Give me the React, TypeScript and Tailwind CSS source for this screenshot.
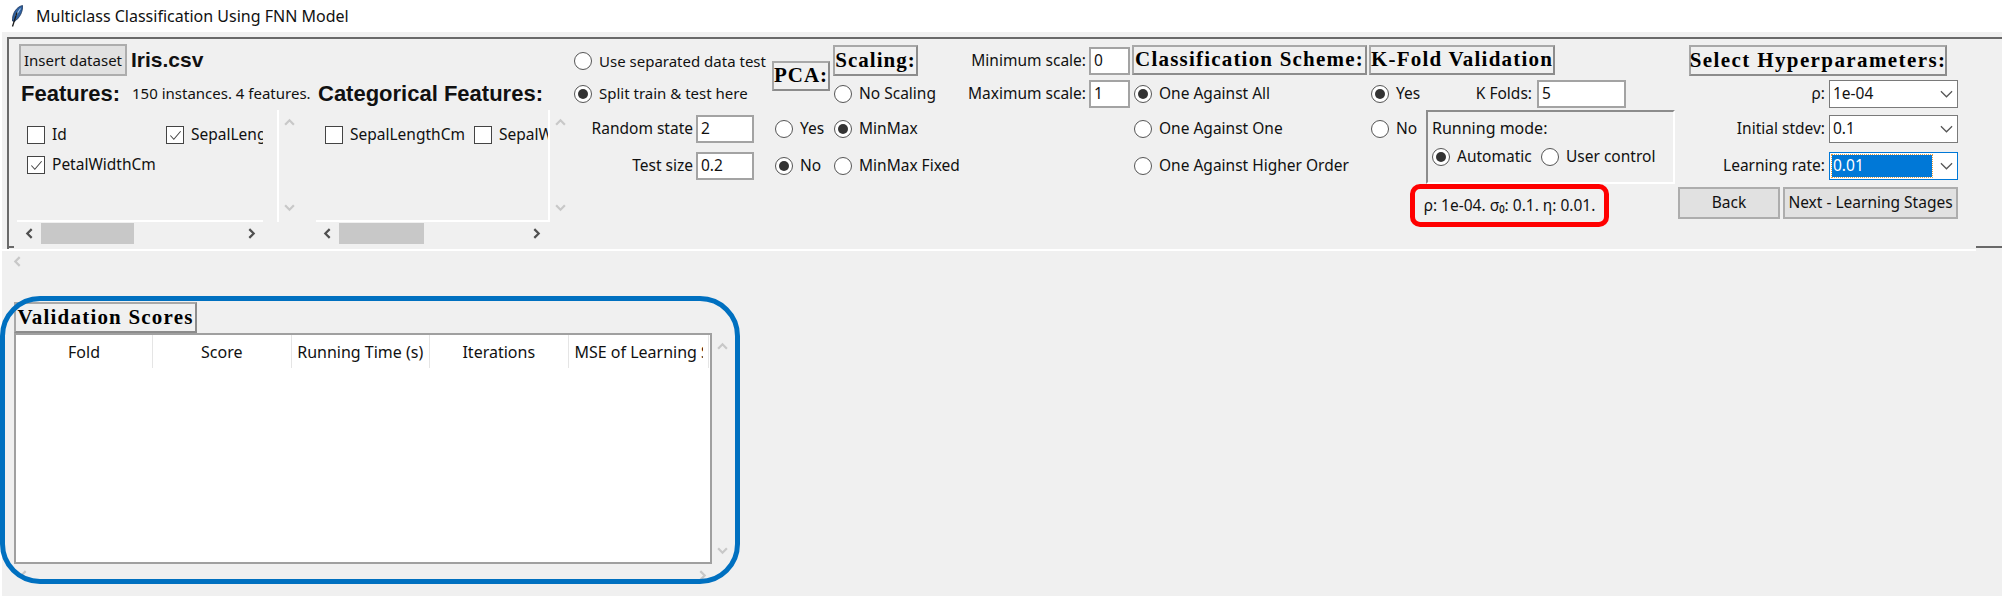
import { ReactNode } from "react";

const arrowPaths = {
  up: "M1 7 L5 3 L9 7",
  down: "M1 3 L5 7 L9 3",
  left: "M7 1 L3 5 L7 9",
  right: "M3 1 L7 5 L3 9",
};

function Arrow({ dir, className }: { dir: keyof typeof arrowPaths; className?: string }) {
  return (
    <svg viewBox="0 0 10 10" className={`size-[11px] ${className ?? ""}`} fill="none" stroke="currentColor" strokeWidth="2">
      <path d={arrowPaths[dir]} />
    </svg>
  );
}

function Radio({ label, checked }: { label?: string; checked?: boolean }) {
  return (
    <div className="flex items-center gap-[7px] whitespace-nowrap">
      <span className="flex size-[18px] shrink-0 items-center justify-center rounded-full border-[1.5px] border-[#555555] bg-white">
        {checked && <span className="size-[10px] rounded-full bg-[#333333]" />}
      </span>
      {label}
    </div>
  );
}

function Check({ label, checked, width }: { label: string; checked?: boolean; width: string }) {
  return (
    <div className={`flex h-[18px] shrink-0 items-center gap-[7px] whitespace-nowrap ${width}`}>
      <span className="flex size-[18px] shrink-0 items-center justify-center border-[1.5px] border-[#444444] bg-white">
        {checked && (
          <svg viewBox="0 0 16 16" className="size-[15px]" fill="none" stroke="#444444" strokeWidth="1.1">
            <path d="M2.5 8 L6.2 12 L13.5 3.5" />
          </svg>
        )}
      </span>
      {label}
    </div>
  );
}

function Heading({ children, className }: { children: ReactNode; className: string }) {
  return (
    <div
      className={`flex items-center justify-center whitespace-nowrap border-2 border-b-[#8c8c8c] border-l-[#a8a8a8] border-r-[#8c8c8c] border-t-[#a8a8a8] font-['Liberation_Serif'] text-[21px] font-bold text-black ${className}`}
    >
      {children}
    </div>
  );
}

function Entry({ value, className }: { value: string; className: string }) {
  return (
    <div className={`flex h-[28px] items-center border-2 border-[#a3a3a3] bg-white pl-[3px] ${className}`}>{value}</div>
  );
}

function Combo({ label, value, focused }: { label: string; value: string; focused?: boolean }) {
  return (
    <div className="flex items-center justify-end gap-[4px]">
      {label}
      <div
        className={`flex h-[28px] w-[129px] items-center border-[1.5px] bg-white pl-[2px] ${
          focused ? "border-[#0078d7]" : "border-[#7a7a7a]"
        }`}
      >
        <div
          className={`flex h-[22px] w-[100px] items-center pl-[1px] ${
            focused ? "bg-[#0078d7] text-white outline-1 outline-dotted outline-[#e8a040]" : ""
          }`}
        >
          {value}
        </div>
        <svg viewBox="0 0 14 8" className="ml-[8px] h-[8px] w-[13px]" fill="none" stroke="#555555" strokeWidth="1.3">
          <path d="M1 1 L7 7 L13 1" />
        </svg>
      </div>
    </div>
  );
}

function VScroll({ height, className }: { height: string; className: string }) {
  return (
    <div className={`flex w-[20px] flex-col items-center justify-between text-[#c8c8c8] ${height} ${className}`}>
      <Arrow dir="up" />
      <Arrow dir="down" />
    </div>
  );
}

function ListPane({
  children,
  viewport,
  left,
  thumb,
  gap,
}: {
  children: ReactNode;
  viewport: string;
  left: string;
  thumb: string;
  gap: string;
}) {
  return (
    <div className="flex">
      <div className={viewport}>
        <div className="h-[112px] overflow-hidden border-b-2 border-white">{children}</div>
        <div className="flex h-[22px] items-center text-[#505050]">
          <div className={`flex justify-center ${left}`}>
            <Arrow dir="left" />
          </div>
          <div className={`h-[21px] bg-[#c8c8c8] ${thumb}`} />
          <div className="flex-1" />
          <div className="flex w-[24px] justify-center">
            <Arrow dir="right" />
          </div>
        </div>
      </div>
      <div className={`h-[112px] w-[2px] bg-white ${gap}`} />
      <VScroll height="h-[96px]" className="mt-[7px]" />
    </div>
  );
}

function FeatherIcon() {
  return (
    <svg viewBox="0 0 12 22" className="h-[22px] w-[12px]">
      <path d="M1.5 16 C1 9 5 2 11.5 0.5 C12 7 8.5 13 3.5 16.5 Z" fill="#2f62a3" stroke="#1c3358" strokeWidth="0.8" />
      <path d="M4.5 11 L9.5 3.5" stroke="#a8c8e4" strokeWidth="1.1" />
      <path d="M6 7.5 L1.5 21.5" stroke="#1b1b1b" strokeWidth="1.3" fill="none" />
    </svg>
  );
}

export default function App() {
  const columns = ["Score", "Running Time (s)", "Iterations"];

  return (
    <div className="relative flex h-[596px] w-[2002px] flex-col overflow-hidden bg-white pl-[2px] font-['Noto_Sans',sans-serif] text-[15.5px] text-[#111111]">
      <div className="flex h-[32px] shrink-0 items-center gap-[13px] pl-[9px]">
        <FeatherIcon />
        <span className="text-[16px]">Multiclass Classification Using FNN Model</span>
      </div>

      <div className="flex flex-1 flex-col bg-[#f0f0f0] pt-[5px]">
        <div className="relative ml-[5px] flex h-[212px] shrink-0 border-l-2 border-t-2 border-[#696969]">
          <div className="absolute -left-[2px] bottom-[1px] h-[2px] w-[7px] bg-[#696969]" />
          <div className="absolute right-0 bottom-[1px] h-[2px] w-[26px] bg-[#696969]" />

          {/* dataset + feature lists */}
          <div className="flex w-[565px] shrink-0 flex-col pl-[8px] pt-[5px]">
            <div className="flex items-center">
              <button className="ml-[2px] h-[32px] w-[108px] border-2 border-[#adadad] bg-[#e1e1e1] text-[15px]">
                Insert dataset
              </button>
              <span className="ml-[4px] font-['Liberation_Sans'] text-[21px] font-bold">Iris.csv</span>
            </div>
            <div className="flex h-[34px] items-center pl-[4px] font-['Liberation_Sans'] text-[22px] font-bold">
              <span className="w-[111px]">Features:</span>
              <span className="w-[186px] whitespace-nowrap font-['Noto_Sans'] text-[15px] font-normal">
                150 instances. 4 features.
              </span>
              <span className="whitespace-nowrap">Categorical Features:</span>
            </div>
            <div className="flex">
              <ListPane viewport="w-[246px]" left="w-[24px]" thumb="w-[93px]" gap="ml-[14px]">
                <div className="flex pl-[10px] pt-[16px]">
                  <Check label="Id" width="w-[139px]" />
                  <Check label="SepalLengthCm" checked width="w-[139px]" />
                </div>
                <div className="mt-[12px] pl-[10px]">
                  <Check label="PetalWidthCm" checked width="w-[139px]" />
                </div>
              </ListPane>
              <div className="w-[17px]" />
              <ListPane viewport="w-[232px]" left="w-[23px]" thumb="w-[85px]" gap="">
                <div className="flex pl-[9px] pt-[16px]">
                  <Check label="SepalLengthCm" width="w-[149px]" />
                  <Check label="SepalWidthCm" width="w-[149px]" />
                </div>
              </ListPane>
            </div>
          </div>

          {/* options, laid out the way the tk grid is */}
          <div className="mt-[6px] grid h-fit grid-cols-[198px_61px_132px_167px_237px_57px_129px_121px_2px_280px] grid-rows-[32px_33px_38px_36px_43px] items-center">
            <div className="col-start-1 row-start-1 text-[15px]">
              <Radio label="Use separated data test" />
            </div>
            <div className="col-start-1 row-start-2 text-[15px]">
              <Radio label="Split train & test here" checked />
            </div>
            <div className="col-start-1 row-start-3 flex items-center justify-end gap-[3px] pr-[18px]">
              Random state
              <Entry value="2" className="w-[58px]" />
            </div>
            <div className="col-start-1 row-start-4 flex items-center justify-end gap-[3px] pr-[18px]">
              Test size
              <Entry value="0.2" className="w-[58px]" />
            </div>

            <Heading className="col-start-2 row-span-2 row-start-1 mt-[16px] h-[30px] w-[58px] self-start tracking-[1px]">
              PCA:
            </Heading>
            <div className="col-start-2 row-start-3 pl-[3px]">
              <Radio label="Yes" />
            </div>
            <div className="col-start-2 row-start-4 pl-[3px]">
              <Radio label="No" checked />
            </div>

            <Heading className="col-start-3 row-start-1 h-[31px] w-[85px] self-start tracking-[1px]">Scaling:</Heading>
            <div className="col-start-3 row-start-2 pl-[1px]">
              <Radio label="No Scaling" />
            </div>
            <div className="col-start-3 row-start-3 pl-[1px]">
              <Radio label="MinMax" checked />
            </div>
            <div className="col-start-3 row-start-4 pl-[1px]">
              <Radio label="MinMax Fixed" />
            </div>

            <div className="col-start-4 row-start-1 flex items-center justify-end gap-[3px] whitespace-nowrap pr-[2px]">
              Minimum scale:
              <Entry value="0" className="w-[41px]" />
            </div>
            <div className="col-start-4 row-start-2 flex items-center justify-end gap-[3px] whitespace-nowrap pr-[2px]">
              Maximum scale:
              <Entry value="1" className="w-[41px]" />
            </div>

            <Heading className="col-start-5 row-start-1 h-[30px] w-[235px] self-start tracking-[1.2px]">
              Classification Scheme:
            </Heading>
            <div className="col-start-5 row-start-2 pl-[2px]">
              <Radio label="One Against All" checked />
            </div>
            <div className="col-start-5 row-start-3 pl-[2px]">
              <Radio label="One Against One" />
            </div>
            <div className="col-start-5 row-start-4 pl-[2px]">
              <Radio label="One Against Higher Order" />
            </div>

            <Heading className="col-span-2 col-start-6 row-start-1 h-[30px] w-[186px] self-start tracking-[1.2px]">
              K-Fold Validation
            </Heading>
            <div className="col-start-6 row-start-2 pl-[2px]">
              <Radio label="Yes" checked />
            </div>
            <div className="col-start-6 row-start-3 pl-[2px]">
              <Radio label="No" />
            </div>
            <div className="col-span-2 col-start-7 row-start-2 flex items-center justify-end gap-[5px] pr-[50px]">
              K Folds:
              <Entry value="5" className="w-[89px]" />
            </div>

            <div className="col-span-2 col-start-7 row-span-2 row-start-3 h-full w-[249px] border-2 border-b-white border-l-[#8c8c8c] border-r-white border-t-[#8c8c8c] pl-[4px] pt-[4px] text-[16px]">
              <div className="h-[26px]">Running mode:</div>
              <div className="mt-[3px] flex items-center text-[15.5px]">
                <div className="w-[109px]">
                  <Radio label="Automatic" checked />
                </div>
                <Radio label="User control" />
              </div>
            </div>

            <div className="col-span-3 col-start-6 row-start-5 ml-[41px] flex h-[43px] w-[199px] items-center justify-center whitespace-nowrap rounded-[10px] border-[5px] border-[#ff0000] text-[15.5px]">
              ρ: 1e-04. σ₀: 0.1. η: 0.01.
            </div>

            <Heading className="col-start-10 row-start-1 h-[31px] w-[258px] self-start justify-self-center tracking-[1.4px]">
              Select Hyperparameters:
            </Heading>
            <div className="col-start-10 row-start-2">
              <Combo label="ρ:" value="1e-04" />
            </div>
            <div className="col-start-10 row-start-3">
              <Combo label="Initial stdev:" value="0.1" />
            </div>
            <div className="col-start-10 row-start-4">
              <Combo label="Learning rate:" value="0.01" focused />
            </div>
            <div className="col-start-10 row-start-5 flex gap-[3px] self-start pt-[3px]">
              <button className="h-[32px] w-[102px] border-2 border-[#adadad] bg-[#e1e1e1]">Back</button>
              <button className="h-[32px] w-[175px] whitespace-nowrap border-2 border-[#adadad] bg-[#e1e1e1]">
                Next - Learning Stages
              </button>
            </div>
          </div>
        </div>

        <div className="h-[2px] w-[1974px] bg-white" />
        <div className="flex h-[21px] items-center pl-[10px] text-[#c8c8c8]">
          <Arrow dir="left" />
        </div>

        {/* validation table */}
        <div className="ml-[12px] mt-[30px] flex flex-col">
          <Heading className="h-[31px] w-[183px] tracking-[1.2px]">Validation Scores</Heading>
          <div className="flex">
            <div className="h-[231px] w-[698px] border-2 border-[#a0a0a0] bg-white text-[16px]">
              <div className="flex h-[33px]">
                <div className="flex w-[137px] items-center justify-center border-r border-[#e5e5e5]">Fold</div>
                {columns.map((c) => (
                  <div
                    key={c}
                    className="flex w-[138.5px] items-center justify-center whitespace-nowrap border-r border-[#e5e5e5]"
                  >
                    {c}
                  </div>
                ))}
                <div className="flex w-[140px] items-center overflow-hidden border-r border-[#e5e5e5] pl-[6px] pr-[5px]">
                  <span className="overflow-hidden whitespace-nowrap">MSE of Learning Stages</span>
                </div>
              </div>
            </div>
            <VScroll height="h-[215px]" className="mt-[8px]" />
          </div>
          <div className="flex h-[22px] w-[698px] items-center justify-between px-[4px] text-[#c8c8c8]">
            <Arrow dir="left" />
            <Arrow dir="right" />
          </div>
        </div>
      </div>

      <div className="pointer-events-none absolute left-0 top-[296px] h-[288px] w-[740px] rounded-[40px] border-[5px] border-[#0070c0]" />
    </div>
  );
}
